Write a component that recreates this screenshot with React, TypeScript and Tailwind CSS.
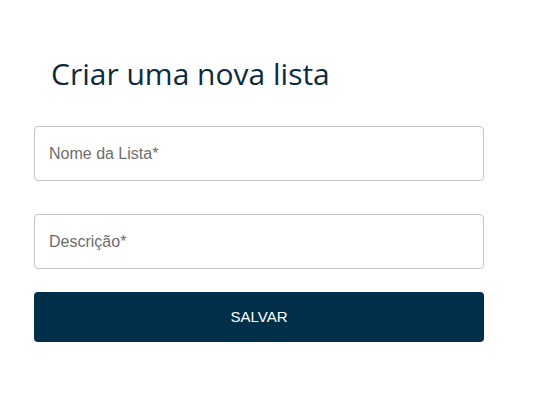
export default function App() {
  return (
    <div className="min-h-[402px] w-[537px] bg-white font-['Liberation_Sans',Arial,sans-serif]">
      <div className="flex w-[450px] flex-col pl-[34px] pt-[54px]">
        <h1 className="pl-[17px] font-['Open_Sans',sans-serif] text-[30px] leading-[40px] text-[#0d2b3e]">
          Criar uma nova lista
        </h1>
        <form className="mt-[32px] flex flex-col" onSubmit={(e) => e.preventDefault()}>
          <input
            type="text"
            placeholder="Nome da Lista*"
            className="h-[55px] w-[450px] rounded-[4px] border border-[#c4c4c4] px-[14px] text-[16px] text-[#333] placeholder:text-[#6e6e6e] outline-none"
          />
          <input
            type="text"
            placeholder="Descrição*"
            className="mt-[33px] h-[55px] w-[450px] rounded-[4px] border border-[#c4c4c4] px-[14px] text-[16px] text-[#333] placeholder:text-[#6e6e6e] outline-none"
          />
          <button
            type="submit"
            className="mt-[23px] h-[50px] w-[450px] rounded-[4px] bg-[#003049] text-[15px] text-white"
          >
            SALVAR
          </button>
        </form>
      </div>
    </div>
  );
}
